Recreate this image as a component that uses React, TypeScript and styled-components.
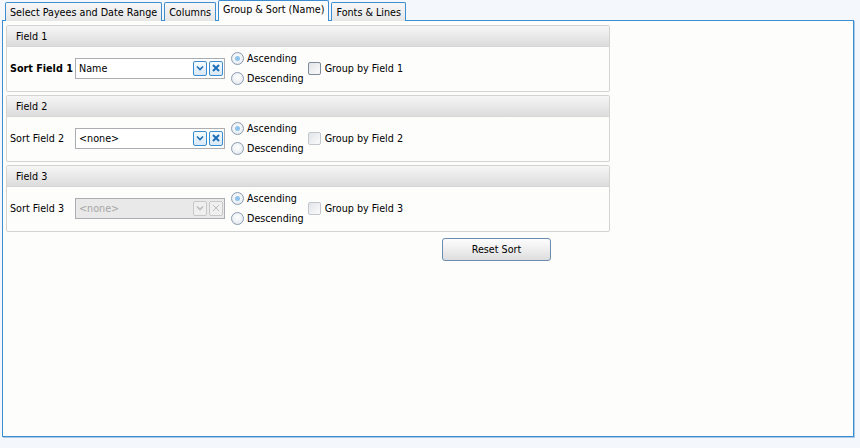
import React from "react";
import styled, { createGlobalStyle, css } from "styled-components";

const Global = createGlobalStyle`
  html, body { margin: 0; padding: 0; }
  body {
    background: #f4f7fb;
    font-family: "DejaVu Sans Condensed", "Liberation Sans", sans-serif;
    font-size: 10.7px;
    color: #000;
  }
`;

const Page = styled.div`
  width: 860px;
  height: 448px;
  display: flex;
  flex-direction: column;
  box-sizing: border-box;
  padding: 0 6px 0 2px;
`;

const TabBar = styled.div`
  display: flex;
  align-items: flex-end;
  gap: 2px;
  height: 20px;
  padding-left: 3px;
  position: relative;
  z-index: 1;
`;

const Tab = styled.div<{ $active?: boolean }>`
  box-sizing: border-box;
  height: 19px;
  margin-bottom: -1px;
  padding: 0 4px;
  display: flex;
  align-items: center;
  border: 1px solid #3d8ed0;
  border-bottom: none;
  border-radius: 2px 2px 0 0;
  background: linear-gradient(#f7f7f7, #e6e6e6);
  white-space: nowrap;
  ${(p) =>
    p.$active &&
    css`
      height: 21px;
      background: #fdfdfd;
      padding-bottom: 3px;
    `}
`;

const Panel = styled.div`
  box-sizing: border-box;
  height: 417px;
  border: 1px solid #3d8ed0;
  background: #fdfdfc;
  box-shadow: 1px 1px 0 #a9c9e6;
  padding: 4px 0 0 3px;
  display: flex;
  flex-direction: column;
  gap: 3px;
`;

const Group = styled.div`
  box-sizing: border-box;
  width: 604px;
  border: 1px solid #d3d3d3;
  border-radius: 2px;
  display: flex;
  flex-direction: column;
`;

const GroupHeader = styled.div`
  height: 20px;
  display: flex;
  align-items: center;
  padding-left: 9px;
  background: linear-gradient(#f6f6f6, #dcdcdc);
  border-bottom: 1px solid #d6d6d6;
`;

const GroupBody = styled.div`
  height: 44px;
  display: flex;
  align-items: center;
  padding-left: 3px;
  padding-bottom: 2px;
  box-sizing: border-box;
`;

const Label = styled.div<{ $bold?: boolean }>`
  width: 65px;
  font-weight: ${(p) => (p.$bold ? "bold" : "normal")};
`;

const Combo = styled.div<{ $disabled?: boolean }>`
  box-sizing: border-box;
  width: 150px;
  height: 21px;
  display: flex;
  align-items: center;
  border: 1px solid #abadb3;
  background: ${(p) => (p.$disabled ? "#e9e9e9" : "#fff")};
  color: ${(p) => (p.$disabled ? "#a6a6a6" : "#000")};
  padding: 0 1px 0 3px;
  gap: 2px;
`;

const ComboText = styled.div`
  flex: 1;
`;

const ComboButton = styled.div<{ $disabled?: boolean }>`
  box-sizing: border-box;
  width: 14px;
  height: 15px;
  display: flex;
  align-items: center;
  justify-content: center;
  border: 1px solid ${(p) => (p.$disabled ? "#c8c8c8" : "#3c8dcf")};
  border-radius: 2px;
  background: ${(p) =>
    p.$disabled ? "#efefef" : "linear-gradient(#f6fbff, #d8e9f7)"};
  color: ${(p) => (p.$disabled ? "#bdbdbd" : "#1f6fb8")};
`;

const Radios = styled.div`
  display: flex;
  flex-direction: column;
  gap: 7px;
  margin-left: 6px;
`;

const RadioRow = styled.div`
  display: flex;
  align-items: center;
  gap: 3px;
  height: 13px;
`;

const RadioCircle = styled.div<{ $checked?: boolean }>`
  box-sizing: border-box;
  width: 13px;
  height: 13px;
  border-radius: 50%;
  border: 1px solid #8a9bb0;
  background: radial-gradient(circle at 50% 40%, #ffffff, #dfe5ec);
  display: flex;
  align-items: center;
  justify-content: center;
  &::after {
    content: "";
    display: ${(p) => (p.$checked ? "block" : "none")};
    width: 5px;
    height: 5px;
    border-radius: 50%;
    background: #8fc3ec;
  }
`;

const CheckRow = styled.div`
  display: flex;
  align-items: center;
  gap: 4px;
  margin-left: 4px;
`;

const CheckBox = styled.div<{ $dim?: boolean }>`
  box-sizing: border-box;
  width: 13px;
  height: 13px;
  border: 1px solid ${(p) => (p.$dim ? "#c2c7ce" : "#7f8b99")};
  border-radius: 2px;
  background: linear-gradient(135deg, #e1e4e8, #fbfbfb);
`;

const ButtonRow = styled.div`
  display: flex;
  padding-left: 436px;
  padding-top: 3px;
`;

const Button = styled.button`
  box-sizing: border-box;
  width: 109px;
  height: 23px;
  border: 1px solid #6a8cb0;
  border-radius: 3px;
  background: linear-gradient(#fdfdfd 0%, #eeeeee 50%, #dddddd 100%);
  font: inherit;
  color: #000;
  padding: 0;
`;

const Chevron = () => (
  <svg width="8" height="6" viewBox="0 0 8 6">
    <path d="M1 1.5 L4 4.5 L7 1.5" fill="none" stroke="currentColor" strokeWidth="1.6" />
  </svg>
);

const Cross = ({ bold }: { bold?: boolean }) => (
  <svg width="8" height="8" viewBox="0 0 8 8">
    <path
      d="M1 1 L7 7 M7 1 L1 7"
      fill="none"
      stroke="currentColor"
      strokeWidth={bold ? 2 : 1}
    />
  </svg>
);

type FieldProps = {
  n: number;
  value: string;
  bold?: boolean;
  disabled?: boolean;
  dimCheck?: boolean;
};

const FieldGroup = ({ n, value, bold, disabled, dimCheck }: FieldProps) => (
  <Group>
    <GroupHeader>Field {n}</GroupHeader>
    <GroupBody>
      <Label $bold={bold}>Sort Field {n}</Label>
      <Combo $disabled={disabled}>
        <ComboText>{value}</ComboText>
        <ComboButton $disabled={disabled}>
          <Chevron />
        </ComboButton>
        <ComboButton $disabled={disabled}>
          <Cross bold={!disabled} />
        </ComboButton>
      </Combo>
      <Radios>
        <RadioRow>
          <RadioCircle $checked />
          Ascending
        </RadioRow>
        <RadioRow>
          <RadioCircle />
          Descending
        </RadioRow>
      </Radios>
      <CheckRow>
        <CheckBox $dim={dimCheck} />
        Group by Field {n}
      </CheckRow>
    </GroupBody>
  </Group>
);

export default function App() {
  return (
    <>
      <Global />
      <Page>
        <TabBar>
          <Tab>Select Payees and Date Range</Tab>
          <Tab>Columns</Tab>
          <Tab $active>Group &amp; Sort (Name)</Tab>
          <Tab>Fonts &amp; Lines</Tab>
        </TabBar>
        <Panel>
          <FieldGroup n={1} value="Name" bold />
          <FieldGroup n={2} value="<none>" dimCheck />
          <FieldGroup n={3} value="<none>" disabled dimCheck />
          <ButtonRow>
            <Button>Reset Sort</Button>
          </ButtonRow>
        </Panel>
      </Page>
    </>
  );
}
